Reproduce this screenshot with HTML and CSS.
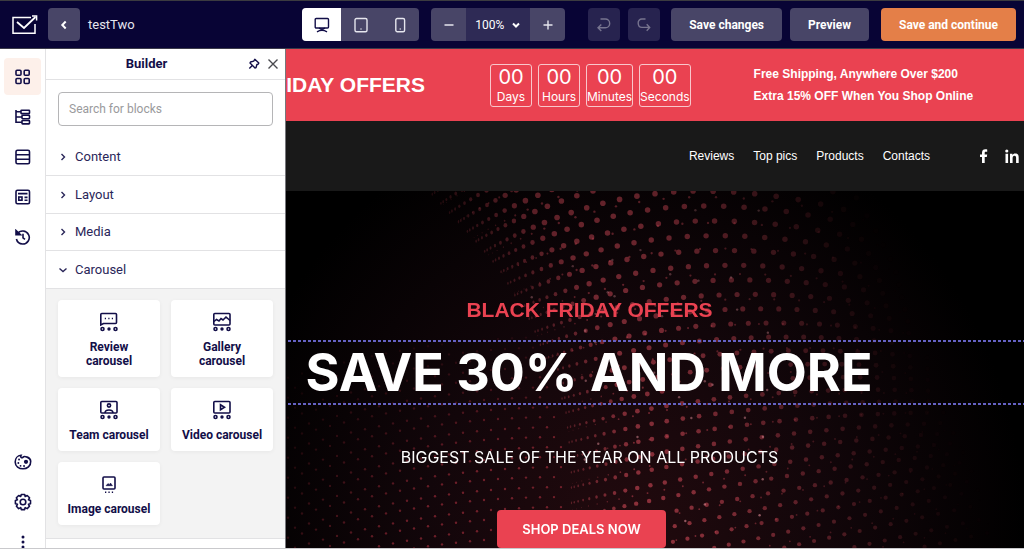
FILE: index.html
```
<!DOCTYPE html>
<html lang="en">
<head>
<meta charset="utf-8">
<title>testTwo - Builder</title>
<link rel="stylesheet" href="styles.css">
</head>
<body>
<div class="app">
  <header class="topbar">
    <svg class="logo" viewBox="0 0 26 20" width="26" height="20" fill="none" stroke="#fff" stroke-width="1.5"><path d="M19 2.500H1v15.800h22V9"/><path d="M5 7l7 6L23.500 2" stroke-width="1.800"/><path d="M20 1h4.600v4.600" stroke-width="1.500"/></svg>
    <button class="btn square" aria-label="Back"><svg viewBox="0 0 16 16" width="16" height="16" class="ico bold"><path d="M9.700 4.500L6.300 8l3.400 3.500"/></svg></button>
    <span class="project">testTwo</span>
    <div class="group devices">
      <button class="seg active" aria-label="Desktop"><svg viewBox="0 0 16 16" width="16" height="16" class="ico"><rect x="1.200" y="1.500" width="13.300" height="9.500" rx="1"/><path d="M5 11.200q3 1.600 6 0M3 14.800q5-3.200 10 0"/></svg></button>
      <button class="seg" aria-label="Tablet"><svg viewBox="0 0 16 16" width="16" height="16" class="ico"><rect x="2" y="1.500" width="12" height="13.300" rx="1.500"/><path d="M7.500 12h1"/></svg></button>
      <button class="seg" aria-label="Mobile"><svg viewBox="0 0 16 16" width="16" height="16" class="ico"><rect x="3.800" y="1.500" width="8.800" height="13.300" rx="1.500"/><path d="M7.700 12h1"/></svg></button>
    </div>
    <div class="group zoom">
      <button class="seg narrow" aria-label="Zoom out"><svg viewBox="0 0 16 16" width="16" height="16" class="ico"><path d="M3.500 8h9"/></svg></button>
      <button class="level">100% <svg viewBox="0 0 10 10" width="10" height="10" class="ico bold"><path d="M2 3.500l3 3 3-3"/></svg></button>
      <button class="seg narrow" aria-label="Zoom in"><svg viewBox="0 0 16 16" width="16" height="16" class="ico"><path d="M3.500 8h9M8 3.500v9"/></svg></button>
    </div>
    <div class="history">
      <button class="btn square dim" aria-label="Undo" disabled><svg viewBox="0 0 16 16" width="16" height="16" class="ico"><path d="M4.500 2h4.800a4.400 4.400 0 010 8.800H2.500M5.300 7.500L2 10.800l3.300 3.300"/></svg></button>
      <button class="btn square dim" aria-label="Redo" disabled><svg viewBox="0 0 16 16" width="16" height="16" class="ico"><path d="M9.500 2H6a3.700 3.700 0 00-3.800 4.200C2.300 9 4 10.400 6 10.400h7.500M10.700 7.300l3 3.100-3 3.300"/></svg></button>
    </div>
    <div class="actions">
      <button class="btn">Save changes</button>
      <button class="btn">Preview</button>
      <button class="btn primary">Save and continue</button>
    </div>
  </header>

  <div class="workspace">
    <nav class="rail" aria-label="Tools">
      <button class="tool selected" aria-label="Blocks"><svg viewBox="0 0 16 16" width="16" height="16" class="ico"><rect x="1" y="1.200" width="5" height="5" rx="1"/><rect x="9.200" y="1.200" width="5" height="5" rx="1"/><rect x="1" y="9.500" width="5" height="5" rx="1"/><rect x="9.200" y="9.500" width="5" height="5" rx="1"/></svg></button>
      <button class="tool" aria-label="Structure"><svg viewBox="0 0 16 16" width="16" height="16" class="ico"><path d="M1 1v12.300h6M1 2.800h5M1 8h6"/><rect x="6" y="1.200" width="8.500" height="3.400" rx=".6"/><rect x="7" y="6.300" width="7.500" height="3.400" rx=".6"/><rect x="7" y="11.500" width="7.500" height="3.400" rx=".6"/></svg></button>
      <button class="tool" aria-label="Sections"><svg viewBox="0 0 16 16" width="16" height="16" class="ico"><rect x="1" y="1.200" width="13.500" height="13.500" rx="1.500"/><path d="M1 5.700h13.500M1 10.200h13.500"/></svg></button>
      <button class="tool" aria-label="Templates"><svg viewBox="0 0 16 16" width="16" height="16" class="ico"><rect x="1" y="1.200" width="13.500" height="13.500" rx="1.500"/><path d="M3 4.600h9.500M9.500 8.400h3M9.500 11.300h3"/><rect x="3.800" y="8" width="3.200" height="3.200"/></svg></button>
      <button class="tool" aria-label="Version history"><svg viewBox="0 0 16 16" width="16" height="16" class="ico"><path d="M2.400 4.800A6.500 6.500 0 117.600 15 6.600 6.600 0 011.400 10M8 4.800v4l2 1.600"/><path d="M1 1.500v4.300h4.500z" fill="currentColor"/></svg></button>
      <div class="rail-bottom">
        <button class="tool" aria-label="Styles"><svg viewBox="0 0 18 16" width="18" height="16" class="ico"><path d="M7 1.300C6 3 7.500 4.300 9 3.300c1-1.500 7.500-.3 7.700 4C17 12 13 14.800 9 14.800S1.200 12.500 1.200 8C1.200 4.500 3.500 1.500 7 1.300z"/><circle cx="12" cy="7.800" r="1.300" fill="currentColor"/><path d="M5 5.500h.1M4.300 9h.1M6.500 11.800h.1M10 12h.1" stroke-width="1.800" stroke-linecap="round"/></svg></button>
        <button class="tool" aria-label="Settings"><svg viewBox="0 0 18 18" width="18" height="18" class="ico"><circle cx="9" cy="9" r="2.800"/><path d="M7.300 1.500h3.400l.5 2 2-1 2.300 2.300-1 2 2 .6v3.300l-2 .6 1 2-2.300 2.300-2-1-.6 2H7.300l-.6-2-2 1-2.300-2.300 1-2-2-.6V7.400l2-.6-1-2 2.300-2.300 2 1z" stroke-linejoin="round"/></svg></button>
        <button class="tool" aria-label="More"><svg viewBox="0 0 16 16" width="16" height="16" fill="currentColor"><circle cx="8" cy="3" r="1.500"/><circle cx="8" cy="8" r="1.500"/><circle cx="8" cy="13" r="1.500"/></svg></button>
      </div>
    </nav>

    <aside class="panel">
      <div class="panel-head">
        <h2 class="panel-title">Builder</h2>
        <button class="icon-btn" aria-label="Pin"><svg viewBox="0 0 12 12" width="12" height="12" class="ico"><path d="M6.800 1.300l4 3.800-.7 1.100-1.200.3-.9 3.200-1 .3L2 5l.5-1 3.200-.9zM4.300 7.600L1.300 10.600" stroke-linejoin="round"/></svg></button>
        <button class="icon-btn grey" aria-label="Close"><svg viewBox="0 0 12 12" width="12" height="12" class="ico"><path d="M1.500 1.500l9 9M10.500 1.500l-9 9"/></svg></button>
      </div>
      <div class="search"><input class="search-input" type="text" placeholder="Search for blocks" aria-label="Search for blocks"></div>
      <button class="fold"><svg viewBox="0 0 10 10" width="10" height="10" class="ico"><path d="M3.500 2l3 3-3 3"/></svg>Content</button>
      <button class="fold"><svg viewBox="0 0 10 10" width="10" height="10" class="ico"><path d="M3.500 2l3 3-3 3"/></svg>Layout</button>
      <button class="fold tight"><svg viewBox="0 0 10 10" width="10" height="10" class="ico"><path d="M3.500 2l3 3-3 3"/></svg>Media</button>
      <button class="fold" aria-expanded="true"><svg viewBox="0 0 10 10" width="10" height="10" class="ico"><path d="M1.500 3.500l3.500 3 3.500-3"/></svg>Carousel</button>
      <div class="cards">
        <button class="card"><svg viewBox="0 0 20 20" width="20" height="20" class="ico"><path d="M1.800 13V2.500q0-1 1-1h13.700q1 0 1 1v8q0 1-1 1H4.500z"/><path d="M5.800 6.500h1.200M9.300 6.500h1.200M12.800 6.500H14"/><circle cx="3.500" cy="17" r="1.500"/><circle cx="16.500" cy="17" r="1.500"/><circle cx="10" cy="17" r=".9" fill="currentColor"/></svg>Review carousel</button>
        <button class="card"><svg viewBox="0 0 20 20" width="20" height="20" class="ico"><rect x="1.800" y="1.500" width="16.200" height="11.500" rx="1"/><path d="M2 9.500L4.500 7.500l2.500 1.500 2-2.500 2 1.500L14 5l4 3.500"/><circle cx="3.500" cy="17" r="1.500"/><circle cx="16.500" cy="17" r="1.500"/><circle cx="10" cy="17" r=".9" fill="currentColor"/></svg>Gallery carousel</button>
        <button class="card"><svg viewBox="0 0 20 20" width="20" height="20" class="ico"><rect x="1.800" y="1.500" width="16.200" height="11.500" rx="1"/><circle cx="10" cy="5.500" r="1.600"/><path d="M6 13c0-4 8-4 8 0"/><circle cx="3.500" cy="17" r="1.500"/><circle cx="16.500" cy="17" r="1.500"/><circle cx="10" cy="17" r=".9" fill="currentColor"/></svg>Team carousel</button>
        <button class="card"><svg viewBox="0 0 20 20" width="20" height="20" class="ico"><rect x="1.800" y="1.500" width="16.200" height="11.500" rx="1"/><path d="M8.500 4.800v5l4-2.500z"/><circle cx="3.500" cy="17" r="1.500"/><circle cx="16.500" cy="17" r="1.500"/><circle cx="10" cy="17" r=".9" fill="currentColor"/></svg>Video carousel</button>
        <button class="card"><svg viewBox="0 0 20 20" width="20" height="20" class="ico"><rect x="4" y="3" width="12" height="12" rx="1"/><path d="M7 11.700L9 9.500l1.300 1.200L11.500 9l2 2.700z" fill="currentColor" stroke-width=".5"/><path d="M6 18.200h1.300M9.400 18.200h1.300M12.800 18.200h1.300"/></svg>Image carousel</button>
      </div>
    </aside>

    <main class="page">
      <section class="banner">
        <div class="banner-title"><span>BLACK FRIDAY OFFERS</span></div>
        <div class="timer">
          <div class="cell"><b class="num">00</b>Days</div>
          <div class="cell"><b class="num">00</b>Hours</div>
          <div class="cell"><b class="num">00</b>Minutes</div>
          <div class="cell"><b class="num">00</b>Seconds</div>
        </div>
        <div class="perks">
          <p class="perk">Free Shipping, Anywhere Over $200</p>
          <p class="perk">Extra 15% OFF When You Shop Online</p>
        </div>
      </section>
      <nav class="menu" aria-label="Site">
        <div class="links">
          <a class="link" href="#">Reviews</a>
          <a class="link" href="#">Top pics</a>
          <a class="link" href="#">Products</a>
          <a class="link" href="#">Contacts</a>
        </div>
        <div class="socials">
          <a class="social" href="#" aria-label="Facebook"><svg viewBox="0 0 14 14" width="14" height="14" fill="#fff"><path d="M5 14V8H3V5.500h2V3.800C5 1.300 6.300.3 8.300.3c.9 0 1.600.1 1.900.1v2.300H8.800C7.900 2.700 7.700 3.200 7.700 4v1.500h2.500L9.800 8H7.700v6z"/></svg></a>
          <a class="social" href="#" aria-label="LinkedIn"><svg viewBox="0 0 14 14" width="14" height="14" fill="#fff"><circle cx="1.800" cy="2" r="1.600"/><path d="M.5 4.800h2.600V14H.5zM5 4.800h2.400V6c.5-.9 1.500-1.500 2.900-1.500 2.700 0 3.400 1.700 3.400 4.200V14h-2.600V9.300c0-1.300-.2-2.500-1.600-2.500S7.600 8 7.600 9.300V14H5z"/></svg></a>
        </div>
      </nav>
      <section class="hero">
        <canvas class="dots" id="dots"></canvas>
        <div class="hero-body">
          <p class="eyebrow">BLACK FRIDAY OFFERS</p>
          <div class="headline-row"><h1 class="headline">SAVE 30% AND MORE</h1></div>
          <p class="sub">BIGGEST SALE OF THE YEAR ON ALL PRODUCTS</p>
          <button class="shop">SHOP DEALS NOW</button>
        </div>
      </section>
    </main>
  </div>
  <footer class="edge"></footer>
</div>
<script src="dots.js"></script>
</body>
</html>
```

FILE: styles.css
```
* { box-sizing: border-box; }
body { margin: 0; background: #fff; color: #120e48; font: 13px/20px Roboto, sans-serif; }
button { font: inherit; color: inherit; border: 0; padding: 0; margin: 0; background: none; display: flex; align-items: center; justify-content: center; }
h1, h2, p { margin: 0; }
a { color: inherit; text-decoration: none; }
svg { flex: none; display: block; }
.ico { fill: none; stroke: currentColor; stroke-width: 1.400; }
.ico.bold { stroke-width: 2; }
.rail .ico, .card .ico { stroke-width: 1.600; }

.app { display: flex; flex-direction: column; height: 100vh; overflow: hidden; }

.topbar { flex: none; display: flex; align-items: center; padding: 7px 8px; background: #080435; border-top: 1px solid #3b3b40; border-bottom: 1px solid #3b3b4a; color: #fff; }
.logo { margin: 0 10px 0 4px; }
.project { flex: 1; margin-left: 8px; color: #e6e6ee; }
.btn { height: 33px; padding: 0 18px; border-radius: 4px; background: #484567; font-size: 12px; font-weight: 700; }
.btn.square { width: 32px; padding: 0; }
.btn.dim { background: #27234f; color: #77748f; }
.btn.primary { background: #e47f48; margin-left: 4px; }
.group { display: flex; border-radius: 4px; overflow: hidden; background: #484567; }
.seg { width: 39px; height: 33px; color: #e6e6ee; }
.seg.narrow { width: 35px; }
.seg.active { background: #fff; color: #120e48; }
.zoom { margin-left: 12px; }
.level { width: 64px; gap: 7px; background: #2e2a55; font-size: 12px; color: #fff; }
.history { display: flex; gap: 8px; margin: 0 11px 0 23px; }
.actions { display: flex; gap: 8px; }

.workspace { flex: 1; display: flex; min-height: 0; }
.rail { flex: none; width: 46px; display: flex; flex-direction: column; gap: 3px; align-items: center; padding-top: 9px; border-right: 1px solid #e2e2e4; }
.tool { flex: none; width: 37px; height: 37px; border-radius: 4px; }
.tool.selected { background: #fdf0ea; }
.rail-bottom { display: flex; flex-direction: column; gap: 3px; height: 105px; margin-top: auto; }

.panel { flex: none; width: 240px; display: flex; flex-direction: column; border-right: 1px solid #77777c; overflow: hidden; }
.panel-head { flex: none; display: flex; align-items: center; gap: 6px; height: 31px; padding: 0 6px; border-bottom: 1px solid #e2e2e4; }
.panel-title { flex: 1; text-align: center; font-size: 13px; line-height: 20px; }
.icon-btn { width: 13px; height: 20px; }
.icon-btn.grey { color: #4a4a4f; }
.search { padding: 12px; }
.search-input { display: block; width: 100%; height: 34px; padding: 0 10px; border: 1px solid #b5b5b7; border-radius: 4px; font: 12px/20px Roboto, sans-serif; color: #120e48; }
.search-input::placeholder { color: #9a9a9c; }
.fold { flex: none; height: 38px; padding-left: 12px; gap: 7px; justify-content: flex-start; border-bottom: 1px solid #e2e2e4; color: #2a2659; }
.fold.tight { height: 37px; }
.cards { flex: none; display: grid; grid-template-columns: 1fr 1fr; gap: 11px; padding: 11px 12px 13px; background: #f3f3f3; border-bottom: 1px solid #e2e2e4; }
.card { flex-direction: column; justify-content: flex-start; gap: 8px; padding: 12px 8px 9px; border-radius: 4px; background: #fff; box-shadow: 0 1px 4px rgba(0, 0, 0, .05); font-size: 12px; line-height: 14px; font-weight: 700; }

.page { flex: 1; min-width: 0; display: flex; flex-direction: column; background: #000; color: #fff; }
.banner { flex: none; display: flex; align-items: center; height: 72px; background: #ea4251; }
.banner-title { display: flex; justify-content: flex-end; width: 139px; overflow: hidden; white-space: nowrap; font: bold 21px/26px "Liberation Sans", Arial, sans-serif; }
.timer { display: flex; gap: 6px; margin-left: 65px; }
.cell { min-width: 42px; height: 43px; border: 1px solid #f9c6cb; border-radius: 3px; text-align: center; font: 12px/15px Inter, sans-serif; }
.num { display: block; font-weight: 400; font-size: 20px; line-height: 24px; }
.perks { margin-left: 63px; white-space: nowrap; font: bold 12px/22px "Liberation Sans", Arial, sans-serif; }
.menu { flex: none; display: flex; align-items: center; justify-content: flex-end; gap: 47px; height: 70px; padding-right: 5px; background: #191919; font: 12px/18px "Liberation Sans", Arial, sans-serif; }
.links { display: flex; gap: 19px; }
.socials { display: flex; gap: 14px; }
.hero { flex: 1; position: relative; min-height: 0; overflow: hidden; background: radial-gradient(ellipse 400px 430px at 46% 95%, #220a0e, #12060a 50%, #000); }
.dots { position: absolute; top: 0; left: 0; width: 100%; height: 100%; }
.hero-body { position: relative; display: flex; flex-direction: column; align-items: center; padding-top: 106px; }
.eyebrow, .sub { margin-right: 131px; }
.eyebrow { color: #ea4251; font: bold 21px/26px "Liberation Sans", Arial, sans-serif; }
.headline-row { align-self: stretch; margin: 17px 0 0 2px; padding: 2px 134px 2px 0; background: repeating-linear-gradient(90deg, #6562c4 0 3px, transparent 3px 5px) top / 100% 2px no-repeat, repeating-linear-gradient(90deg, #6562c4 0 3px, transparent 3px 5px) bottom / 100% 2px no-repeat; }
.headline { text-align: center; white-space: nowrap; font: bold 52px/61px Inter, sans-serif; }
.sub { margin-top: 40px; font: 16px/24px Inter, sans-serif; }
.shop { margin: 41px 147px 0 0; height: 38px; padding: 0 25px; border-radius: 4px; background: #ea4251; font: 600 13px/20px Inter, sans-serif; color: #fff; }
.edge { flex: none; height: 5px; border-top: 1px solid #c9c9cc; background: #fff; }
```

FILE: dots.js
```
// Draws the halftone wave behind the hero: one bright folded sheet, a finer
// sheet behind it, and a faint field in the lower left.
(function () {
  var c = document.getElementById('dots');
  var w = c.width = c.clientWidth, h = c.height = c.clientHeight;
  var g = c.getContext('2d');
  var seed = 7;
  function rnd() { seed = (seed * 16807) % 2147483647; return seed / 2147483647; }
  function dot(x, y, rx, ry, color, a) {
    if (a <= 0.01) return;
    g.fillStyle = 'rgba(' + color + ',' + a + ')';
    g.beginPath(); g.ellipse(x, y, rx, ry, 0, 0, 7); g.fill();
  }
  // Left edge of the bright sheet, as x for each y.
  var edge = [[-60, 85], [5, 145], [44, 182], [77, 210], [132, 243], [216, 277], [272, 283], [420, 284]];
  function foldX(y) {
    y = Math.max(-60, Math.min(419, y));
    for (var k = 1; k < edge.length; k++) {
      if (y <= edge[k][0]) {
        var p = edge[k - 1], q = edge[k];
        return p[1] + (q[1] - p[1]) * (y - p[0]) / (q[0] - p[0]);
      }
    }
  }
  function light(x, y) {
    var d = (x - 330) / (x > 330 ? 270 + y * 0.4 : 260);
    var v = Math.max(0, 1 - d * d);
    return (x > 330 ? v * v : v) * (0.48 + 0.2 * y / h);
  }
  function sheet(gain, pitch, row, size, alpha, shift) {
    var turn = pitch / gain;
    for (var j = -26; j * row < h + 200; j++) {
      var base = j * row + shift;
      var s = Math.min(1, Math.max(0, base / h));
      for (var i = 2; i < 70; i++) {
        var t = i < turn ? i * i * gain / 2 : pitch * (i - turn / 2);
        var x = 330, y = base;
        for (var n = 0; n < 12; n++) {
          var nx = foldX(y) + t * (1 - 0.3 * Math.max(0, Math.min(1, y / h)));
          x = (x + nx) / 2;
          var dx = x - 414;
          var ny = base + (dx > 0 ? 0.0009 : 0.0013) * dx * dx * (1 - s) - s * 0.22 * dx;
          y = (y + ny) / 2;
        }
        var f = Math.min(1, 0.25 + t / 110);
        var r = size * (1 - 0.25 * s);
        dot(x, y, r * f, r * (0.4 + 0.6 * f), '205,72,86', light(x, y) * alpha * (0.4 + 0.6 * f));
      }
    }
  }
  sheet(1.5, 20, 15, 2.8, 0.95, 0);
  sheet(2.1, 27, 26, 1.2, 0.8, 6);
  for (var j = 0; j < 22; j++) {
    for (var i = 0; i < 24; i++) {
      var x = i * 14 - 12 + (j % 2) * 7;
      var y = 175 + j * 10 - i * 1.8 + Math.pow((i - 12) / 3, 2);
      if (x < foldX(y) - 5) dot(x, y, 1.2, 1.2, '200,55,72', Math.min(0.5, Math.max(0, (y - 120) / 280) * (0.25 + x / 300)));
    }
  }
  for (var n = 0; n < 40; n++) {
    var sx = 200 + rnd() * 300, sy = rnd() * h;
    if (sx > foldX(sy)) dot(sx, sy, 1.2, 1.2, '235,150,160', 0.2 + 0.4 * sy / h);
  }
})();
```
